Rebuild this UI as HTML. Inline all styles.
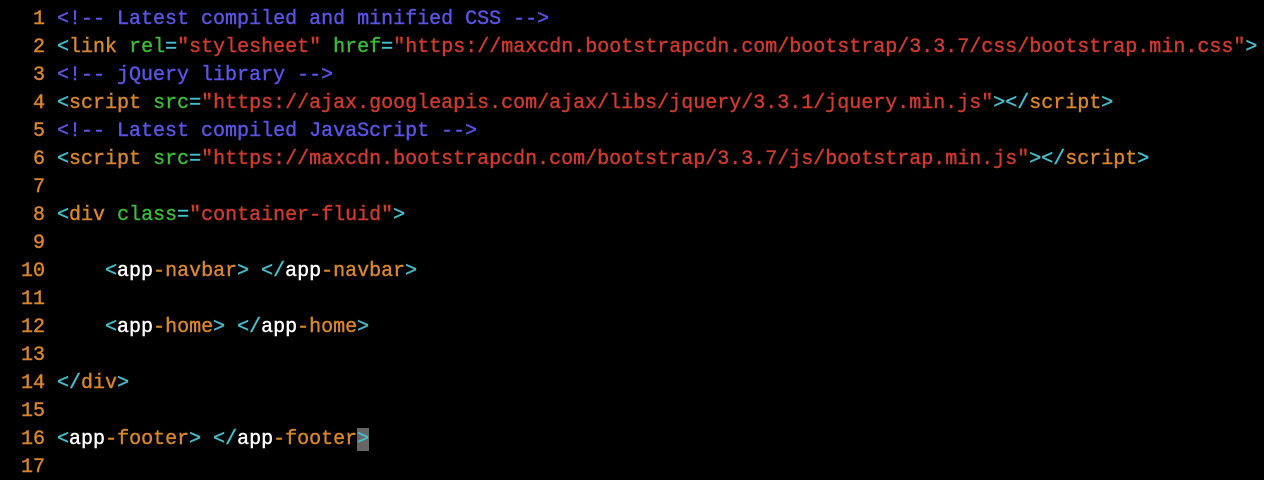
<!DOCTYPE html>
<html><head><style>
html,body{margin:0;background:#000;width:1264px;height:480px;overflow:hidden}
pre{margin:0;padding:6px 0 0 21px;font-family:"Liberation Mono",monospace;font-size:20px;line-height:28px;color:#fff;-webkit-text-stroke:0.4px}
.n{color:#d8862f}.o{color:#d8862f}.c{color:#46bfcc}.g{color:#3cba3c}.s{color:#cf3b2f}.p{color:#5a55e4}.w{color:#fff}
.cur{background:#666;color:#46bfcc}
</style></head><body><pre><span class="n"> 1</span> <span class="p">&lt;!-- Latest compiled and minified CSS --&gt;</span>
<span class="n"> 2</span> <span class="c">&lt;</span><span class="o">link</span> <span class="g">rel</span><span class="c">=</span><span class="s">"stylesheet"</span> <span class="g">href</span><span class="c">=</span><span class="s">"https://maxcdn.bootstrapcdn.com/bootstrap/3.3.7/css/bootstrap.min.css"</span><span class="c">&gt;</span>
<span class="n"> 3</span> <span class="p">&lt;!-- jQuery library --&gt;</span>
<span class="n"> 4</span> <span class="c">&lt;</span><span class="o">script</span> <span class="g">src</span><span class="c">=</span><span class="s">"https://ajax.googleapis.com/ajax/libs/jquery/3.3.1/jquery.min.js"</span><span class="c">&gt;&lt;/</span><span class="o">script</span><span class="c">&gt;</span>
<span class="n"> 5</span> <span class="p">&lt;!-- Latest compiled JavaScript --&gt;</span>
<span class="n"> 6</span> <span class="c">&lt;</span><span class="o">script</span> <span class="g">src</span><span class="c">=</span><span class="s">"https://maxcdn.bootstrapcdn.com/bootstrap/3.3.7/js/bootstrap.min.js"</span><span class="c">&gt;&lt;/</span><span class="o">script</span><span class="c">&gt;</span>
<span class="n"> 7</span>
<span class="n"> 8</span> <span class="c">&lt;</span><span class="o">div</span> <span class="g">class</span><span class="c">=</span><span class="s">"container-fluid"</span><span class="c">&gt;</span>
<span class="n"> 9</span>
<span class="n">10</span>     <span class="c">&lt;</span><span class="w">app</span><span class="o">-navbar</span><span class="c">&gt;</span> <span class="c">&lt;/</span><span class="w">app</span><span class="o">-navbar</span><span class="c">&gt;</span>
<span class="n">11</span>
<span class="n">12</span>     <span class="c">&lt;</span><span class="w">app</span><span class="o">-home</span><span class="c">&gt;</span> <span class="c">&lt;/</span><span class="w">app</span><span class="o">-home</span><span class="c">&gt;</span>
<span class="n">13</span>
<span class="n">14</span> <span class="c">&lt;/</span><span class="o">div</span><span class="c">&gt;</span>
<span class="n">15</span>
<span class="n">16</span> <span class="c">&lt;</span><span class="w">app</span><span class="o">-footer</span><span class="c">&gt;</span> <span class="c">&lt;/</span><span class="w">app</span><span class="o">-footer</span><span class="cur">&gt;</span>
<span class="n">17</span></pre></body></html>
